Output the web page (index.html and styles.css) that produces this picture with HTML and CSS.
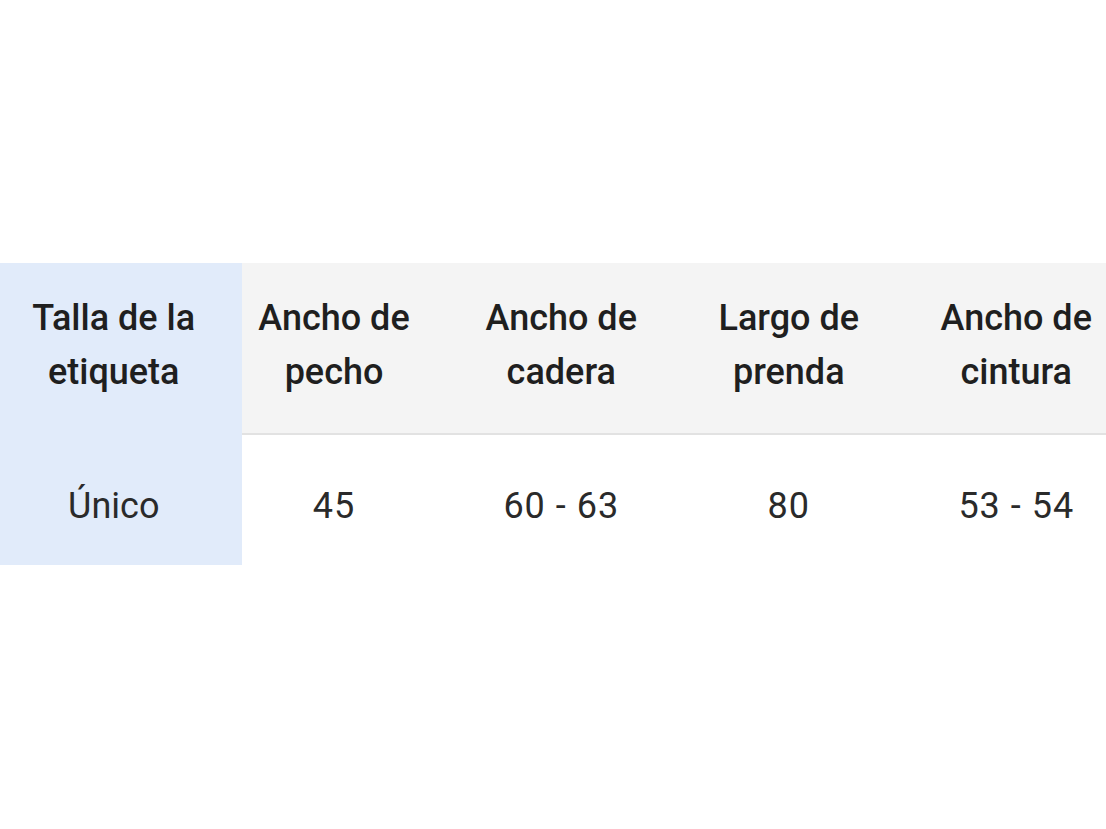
FILE: index.html
```html
<!DOCTYPE html>
<html lang="es">
<head>
<meta charset="utf-8">
<link rel="stylesheet" href="styles.css">
</head>
<body>
<div class="page">
  <div class="table-wrap">
    <div class="size-table">
      <div class="cell head first">Talla de la<br>etiqueta</div>
      <div class="cell head second">Ancho de<br>pecho</div>
      <div class="cell head">Ancho de<br>cadera</div>
      <div class="cell head">Largo de<br>prenda</div>
      <div class="cell head">Ancho de<br>cintura</div>
      <div class="cell body first">Único</div>
      <div class="cell body num second">45</div>
      <div class="cell body num">60 - 63</div>
      <div class="cell body num">80</div>
      <div class="cell body num">53 - 54</div>
    </div>
  </div>
</div>
</body>
</html>
```
FILE: styles.css
```css
html, body {
  margin: 0;
  padding: 0;
  background: #ffffff;
  overflow: hidden;
}
.page {
  padding-top: 263px;
  font-family: Roboto, "Liberation Sans", sans-serif;
}
.table-wrap {
  width: 1106px;
  overflow: hidden;
}
.size-table {
  display: grid;
  grid-template-columns: 242px 205.5px 227.5px 227.5px 227.5px;
  width: 1130px;
}
.cell {
  text-align: center;
  font-size: 36px;
  line-height: 54px;
}
.head {
  background: #f4f4f4;
  color: #1f1f1f;
  font-weight: 500;
  padding: 28px 0 34px;
  border-bottom: 2px solid #e2e2e2;
}
.body {
  color: #2a2a2a;
  font-weight: 400;
  padding: 44px 0 32px;
}
.num {
  letter-spacing: 1px;
}
.first {
  background: #e1ebfa;
  padding-right: 14.5px;
  border-bottom: none;
}
.head.first {
  padding-bottom: 36px;
}
.second {
  padding-right: 21.5px;
}
```
